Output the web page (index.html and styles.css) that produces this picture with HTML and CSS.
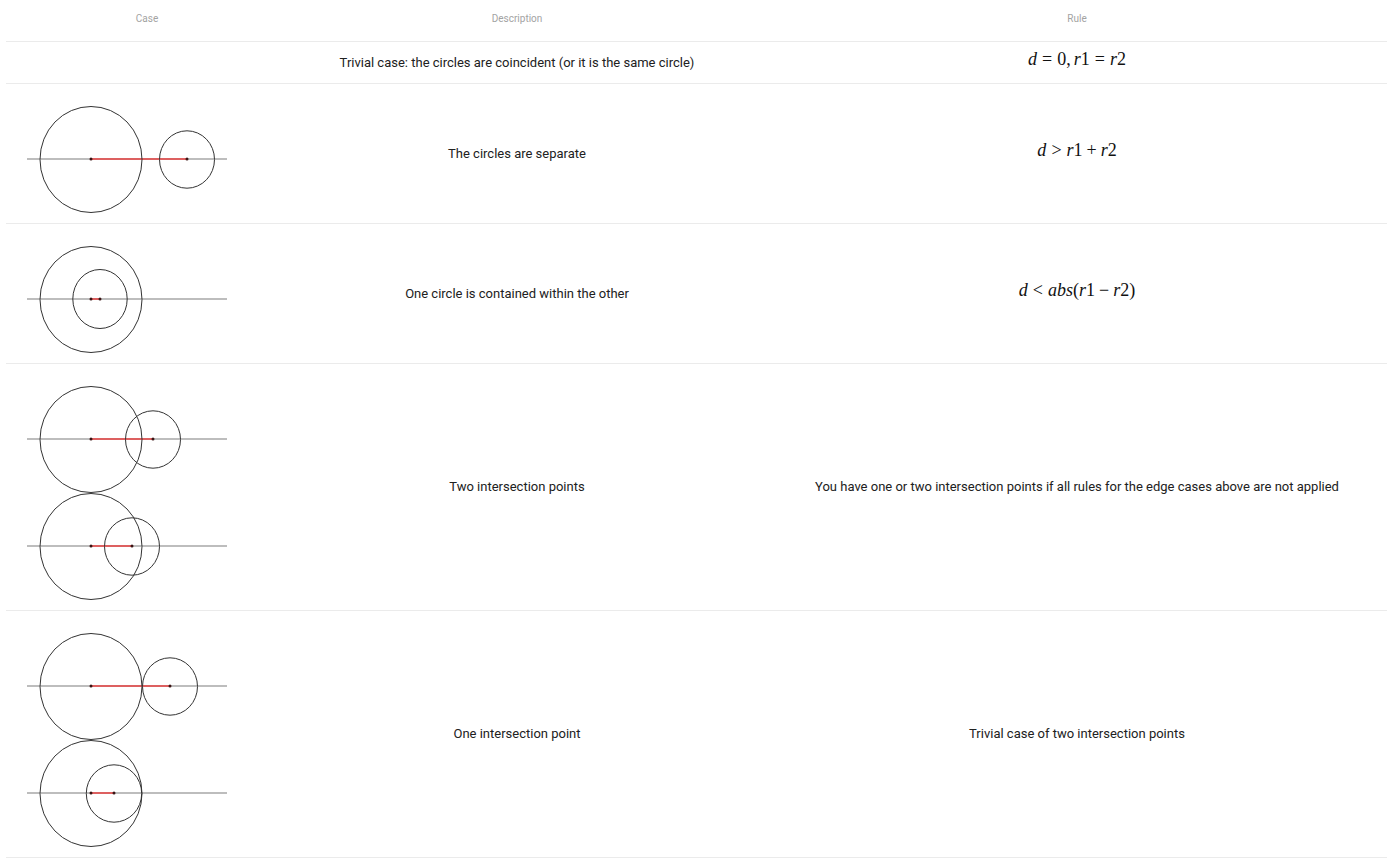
FILE: index.html
```html
<!DOCTYPE html>
<html lang="en">
<head>
    <meta charset="UTF-8">
    <meta name="viewport" content="width=device-width, initial-scale=1.0">
    <title>Circle intersection cases</title>
    <link rel="stylesheet" href="styles.css">
</head>
<body>
    <div class="table-wrap">
        <table class="cases">
            <colgroup>
                <col class="col-case">
                <col class="col-desc">
                <col class="col-rule">
            </colgroup>
            <thead>
                <tr>
                    <th>Case</th>
                    <th>Description</th>
                    <th>Rule</th>
                </tr>
            </thead>
            <tbody>
                <tr class="row-text">
                    <td></td>
                    <td class="desc">Trivial case: the circles are coincident (or it is the same circle)</td>
                    <td class="rule"><span class="math"><i>d</i><span class="rel">=</span>0,<span class="sp"></span><i>r</i>1<span class="rel">=</span><i>r</i>2</span></td>
                </tr>
                <tr>
                    <td class="case">
                        <svg class="fig" width="210" height="107" viewBox="22 0 210 107">
                            <line class="axis" x1="27" y1="53" x2="227" y2="53"/>
                            <line class="dist" x1="91" y1="53" x2="187" y2="53"/>
                            <ellipse class="circ" cx="91" cy="53.5" rx="51" ry="53"/>
                            <ellipse class="circ" cx="187" cy="53.5" rx="27.5" ry="28.7"/>
                            <circle class="dot" cx="91" cy="53" r="1.5"/>
                            <circle class="dot" cx="187" cy="53" r="1.5"/>
                        </svg>
                    </td>
                    <td class="desc">The circles are separate</td>
                    <td class="rule"><span class="math"><i>d</i><span class="rel">&gt;</span><i>r</i>1<span class="bin">+</span><i>r</i>2</span></td>
                </tr>
                <tr>
                    <td class="case">
                        <svg class="fig" width="210" height="107" viewBox="22 0 210 107">
                            <line class="axis" x1="27" y1="53" x2="227" y2="53"/>
                            <line class="dist" x1="91" y1="53" x2="100" y2="53"/>
                            <ellipse class="circ" cx="91" cy="53.5" rx="51" ry="53"/>
                            <ellipse class="circ" cx="100" cy="53" rx="27.2" ry="29.5"/>
                            <circle class="dot" cx="91" cy="53" r="1.5"/>
                            <circle class="dot" cx="100" cy="53" r="1.5"/>
                        </svg>
                    </td>
                    <td class="desc">One circle is contained within the other</td>
                    <td class="rule"><span class="math"><i>d</i><span class="rel">&lt;</span><i>abs</i>(<i>r</i>1<span class="bin">&minus;</span><i>r</i>2)</span></td>
                </tr>
                <tr>
                    <td class="case">
                        <svg class="fig" width="210" height="107" viewBox="22 0 210 107">
                            <line class="axis" x1="27" y1="53" x2="227" y2="53"/>
                            <line class="dist" x1="91" y1="53" x2="153" y2="53"/>
                            <ellipse class="circ" cx="91" cy="53.5" rx="51" ry="53"/>
                            <ellipse class="circ" cx="153" cy="53.5" rx="27.5" ry="28.7"/>
                            <circle class="dot" cx="91" cy="53" r="1.5"/>
                            <circle class="dot" cx="153" cy="53" r="1.5"/>
                        </svg>
                        <svg class="fig" width="210" height="107" viewBox="22 0 210 107">
                            <line class="axis" x1="27" y1="53" x2="227" y2="53"/>
                            <line class="dist" x1="91" y1="53" x2="132" y2="53"/>
                            <ellipse class="circ" cx="91" cy="53.5" rx="51" ry="53"/>
                            <ellipse class="circ" cx="132" cy="53.5" rx="27.5" ry="28.7"/>
                            <circle class="dot" cx="91" cy="53" r="1.5"/>
                            <circle class="dot" cx="132" cy="53" r="1.5"/>
                        </svg>
                    </td>
                    <td class="desc">Two intersection points</td>
                    <td class="rule">You have one or two intersection points if all rules for the edge cases above are not applied</td>
                </tr>
                <tr>
                    <td class="case">
                        <svg class="fig" width="210" height="107" viewBox="22 0 210 107">
                            <line class="axis" x1="27" y1="53" x2="227" y2="53"/>
                            <line class="dist" x1="91" y1="53" x2="170" y2="53"/>
                            <ellipse class="circ" cx="91" cy="53.5" rx="51" ry="53"/>
                            <ellipse class="circ" cx="170" cy="53.5" rx="27.5" ry="28.7"/>
                            <circle class="dot" cx="91" cy="53" r="1.5"/>
                            <circle class="dot" cx="170" cy="53" r="1.5"/>
                        </svg>
                        <svg class="fig" width="210" height="107" viewBox="22 0 210 107">
                            <line class="axis" x1="27" y1="53" x2="227" y2="53"/>
                            <line class="dist" x1="91" y1="53" x2="114" y2="53"/>
                            <ellipse class="circ" cx="91" cy="53.5" rx="51" ry="53"/>
                            <ellipse class="circ" cx="114" cy="53.5" rx="27.7" ry="28.7"/>
                            <circle class="dot" cx="91" cy="53" r="1.5"/>
                            <circle class="dot" cx="114" cy="53" r="1.5"/>
                        </svg>
                    </td>
                    <td class="desc">One intersection point</td>
                    <td class="rule">Trivial case of two intersection points</td>
                </tr>
            </tbody>
        </table>
    </div>
</body>
</html>
```

FILE: styles.css
```css
html, body {
    margin: 0;
    padding: 0;
    background: #fff;
    overflow: hidden;
    font-family: Roboto, "Liberation Sans", Arial, sans-serif;
    color: #212121;
}
.table-wrap {
    width: 100%;
    overflow: hidden;
}
.cases {
    margin-left: 6px;
    width: 1402px;
    table-layout: fixed;
    border-collapse: collapse;
    border-spacing: 0;
}
.col-case {
    width: 282px;
}
.col-desc {
    width: 458px;
}
.col-rule {
    width: 662px;
}
.cases th {
    height: 41px;
    padding: 0 16px 3px;
    font-size: 10px;
    font-weight: 400;
    color: #a3a3a3;
    text-align: center;
    vertical-align: middle;
    border-bottom: 1px solid #ebebeb;
    box-sizing: border-box;
}
.cases td {
    padding: 0 16px;
    font-size: 13px;
    text-align: center;
    vertical-align: middle;
    border-bottom: 1px solid #ebebeb;
}
.row-text td {
    height: 41px;
}
.cases td.case {
    text-align: left;
    padding: 22px 16px 10px;
}
.fig {
    display: block;
}
.axis {
    stroke: #bdbdbd;
    stroke-width: 2;
}
.dist {
    stroke: #dd6060;
    stroke-width: 2;
}
.circ {
    fill: none;
    stroke: #333;
    stroke-width: 1;
}
.dot {
    fill: #3a1414;
}
.rule .math {
    display: inline-block;
    position: relative;
    top: -3px;
    font-family: "Liberation Serif", "Times New Roman", serif;
    font-size: 18px;
    color: #111;
    white-space: nowrap;
}
.math i {
    font-style: italic;
}
.math .rel {
    margin: 0 0.28em;
}
.math .bin {
    margin: 0 0.22em;
}
.math .sp {
    display: inline-block;
    width: 0.17em;
}
```
